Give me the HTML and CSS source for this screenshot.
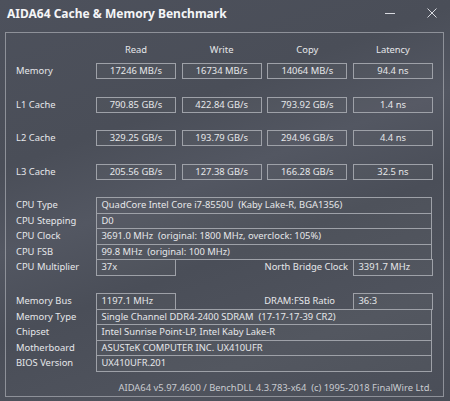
FILE: index.html
```html
<!DOCTYPE html>
<html>
<head>
<meta charset="utf-8">
<link rel="stylesheet" href="styles.css">
</head>
<body>
<div class="window">
  <div class="titlebar">
    <div class="title">AIDA64 Cache &amp; Memory Benchmark</div>
    <div class="controls">
      <svg class="ctl" width="12" height="12" viewBox="0 0 12 12"><line x1="1" y1="6.5" x2="11" y2="6.5" stroke="#d8dae0" stroke-width="1"/></svg>
      <svg class="ctl close" width="12" height="12" viewBox="0 0 12 12"><path d="M1.5 1.5 L10.5 10.5 M10.5 1.5 L1.5 10.5" stroke="#d8dae0" stroke-width="1" fill="none"/></svg>
    </div>
  </div>
  <div class="panel">
    <div class="bench head">
      <div></div>
      <div class="h">Read</div>
      <div class="h">Write</div>
      <div class="h">Copy</div>
      <div class="h">Latency</div>
    </div>
    <div class="bench row">
      <div class="lbl">Memory</div>
      <div class="val">17246 MB/s</div>
      <div class="val">16734 MB/s</div>
      <div class="val">14064 MB/s</div>
      <div class="val">94.4 ns</div>
    </div>
    <div class="bench row">
      <div class="lbl">L1 Cache</div>
      <div class="val">790.85 GB/s</div>
      <div class="val">422.84 GB/s</div>
      <div class="val">793.92 GB/s</div>
      <div class="val">1.4 ns</div>
    </div>
    <div class="bench row">
      <div class="lbl">L2 Cache</div>
      <div class="val">329.25 GB/s</div>
      <div class="val">193.79 GB/s</div>
      <div class="val">294.96 GB/s</div>
      <div class="val">4.4 ns</div>
    </div>
    <div class="bench row">
      <div class="lbl">L3 Cache</div>
      <div class="val">205.56 GB/s</div>
      <div class="val">127.38 GB/s</div>
      <div class="val">166.28 GB/s</div>
      <div class="val">32.5 ns</div>
    </div>

    <div class="info">
      <div class="irow"><div class="lbl">CPU Type</div><div class="box wide">QuadCore Intel Core i7-8550U&nbsp; (Kaby Lake-R, BGA1356)</div></div>
      <div class="irow"><div class="lbl">CPU Stepping</div><div class="box wide">D0</div></div>
      <div class="irow"><div class="lbl">CPU Clock</div><div class="box wide">3691.0 MHz&nbsp; (original: 1800 MHz, overclock: 105%)</div></div>
      <div class="irow"><div class="lbl">CPU FSB</div><div class="box wide">99.8 MHz&nbsp; (original: 100 MHz)</div></div>
      <div class="irow"><div class="lbl">CPU Multiplier</div><div class="box short">37x</div><div class="rlbl nb">North Bridge Clock</div><div class="box short">3391.7 MHz</div></div>
    </div>

    <div class="info mem">
      <div class="irow"><div class="lbl">Memory Bus</div><div class="box short">1197.1 MHz</div><div class="rlbl dram">DRAM:FSB Ratio</div><div class="box short">36:3</div></div>
      <div class="irow"><div class="lbl">Memory Type</div><div class="box wide">Single Channel DDR4-2400 SDRAM&nbsp; (17-17-17-39 CR2)</div></div>
      <div class="irow"><div class="lbl">Chipset</div><div class="box wide">Intel Sunrise Point-LP, Intel Kaby Lake-R</div></div>
      <div class="irow"><div class="lbl">Motherboard</div><div class="box wide">ASUSTeK COMPUTER INC. UX410UFR</div></div>
      <div class="irow"><div class="lbl">BIOS Version</div><div class="box wide">UX410UFR.201</div></div>
    </div>

    <div class="footer">AIDA64 v5.97.4600 / BenchDLL 4.3.783-x64&nbsp; (c) 1995-2018 FinalWire Ltd.</div>
  </div>
</div>
</body>
</html>
```
FILE: styles.css
```css
* { box-sizing: border-box; }
html, body { margin: 0; padding: 0; }
body {
  width: 450px;
  height: 401px;
  overflow: hidden;
  font-family: "Noto Sans", "Open Sans", sans-serif;
  color: #e6e7ea;
  background: linear-gradient(160deg, #4d515c 0%, #4a4e58 30%, #535762 45%, #4a4e58 60%, #4f535d 80%, #4a4e58 100%);
}
.window { width: 450px; height: 401px; }
.titlebar {
  height: 32px;
  display: flex;
  align-items: flex-start;
  justify-content: space-between;
  padding-left: 7px;
}
.title {
  font-weight: bold;
  font-size: 12px;
  line-height: 16px;
  margin-top: 6px;
  color: #f4f5f7;
}
.controls { display: flex; margin-top: 7px; margin-right: 12.5px; }
.ctl { display: block; }
.close { margin-left: 29.5px; }

.panel {
  margin-left: 5px;
  width: 439px;
  height: 365px;
  border: 1px solid #8e9199;
  padding: 9px 10px 0 10px;
  font-size: 9.4px;
}
.bench {
  display: grid;
  grid-template-columns: 74.33px 80px 80px 80px 80px;
  column-gap: 5.67px;
  height: 16px;
}
.head { margin-bottom: 5px; }
.row { margin-bottom: 17.5px; }
.h { text-align: center; line-height: 16px; }
.lbl { line-height: 16px; white-space: nowrap; }
.val {
  border: 1px solid #9ea1a8;
  background: rgba(255,255,255,0.025);
  text-align: center;
  line-height: 14px;
  white-space: nowrap;
}
.info { display: flex; flex-direction: column; }
.mem { margin-top: 17.5px; }
.irow { display: flex; height: 16.5px; }
.irow + .irow { margin-top: -1px; }
.irow .lbl { width: 80px; flex: none; line-height: 16px; }
.box {
  border: 1px solid #9ea1a8;
  background: rgba(255,255,255,0.025);
  padding-left: 4.5px;
  line-height: 14.5px;
  white-space: nowrap;
  height: 16.5px;
}
.wide { width: 336px; }
.short { width: 80px; flex: none; }
.rlbl { flex: 1; text-align: right; line-height: 16.5px; white-space: nowrap; }
.nb { padding-right: 5px; }
.dram { padding-right: 18px; }
.footer {
  margin-top: 8.5px;
  text-align: right;
  padding-right: 1px;
  line-height: 16px;
  color: #c9cbd0;
}
```
